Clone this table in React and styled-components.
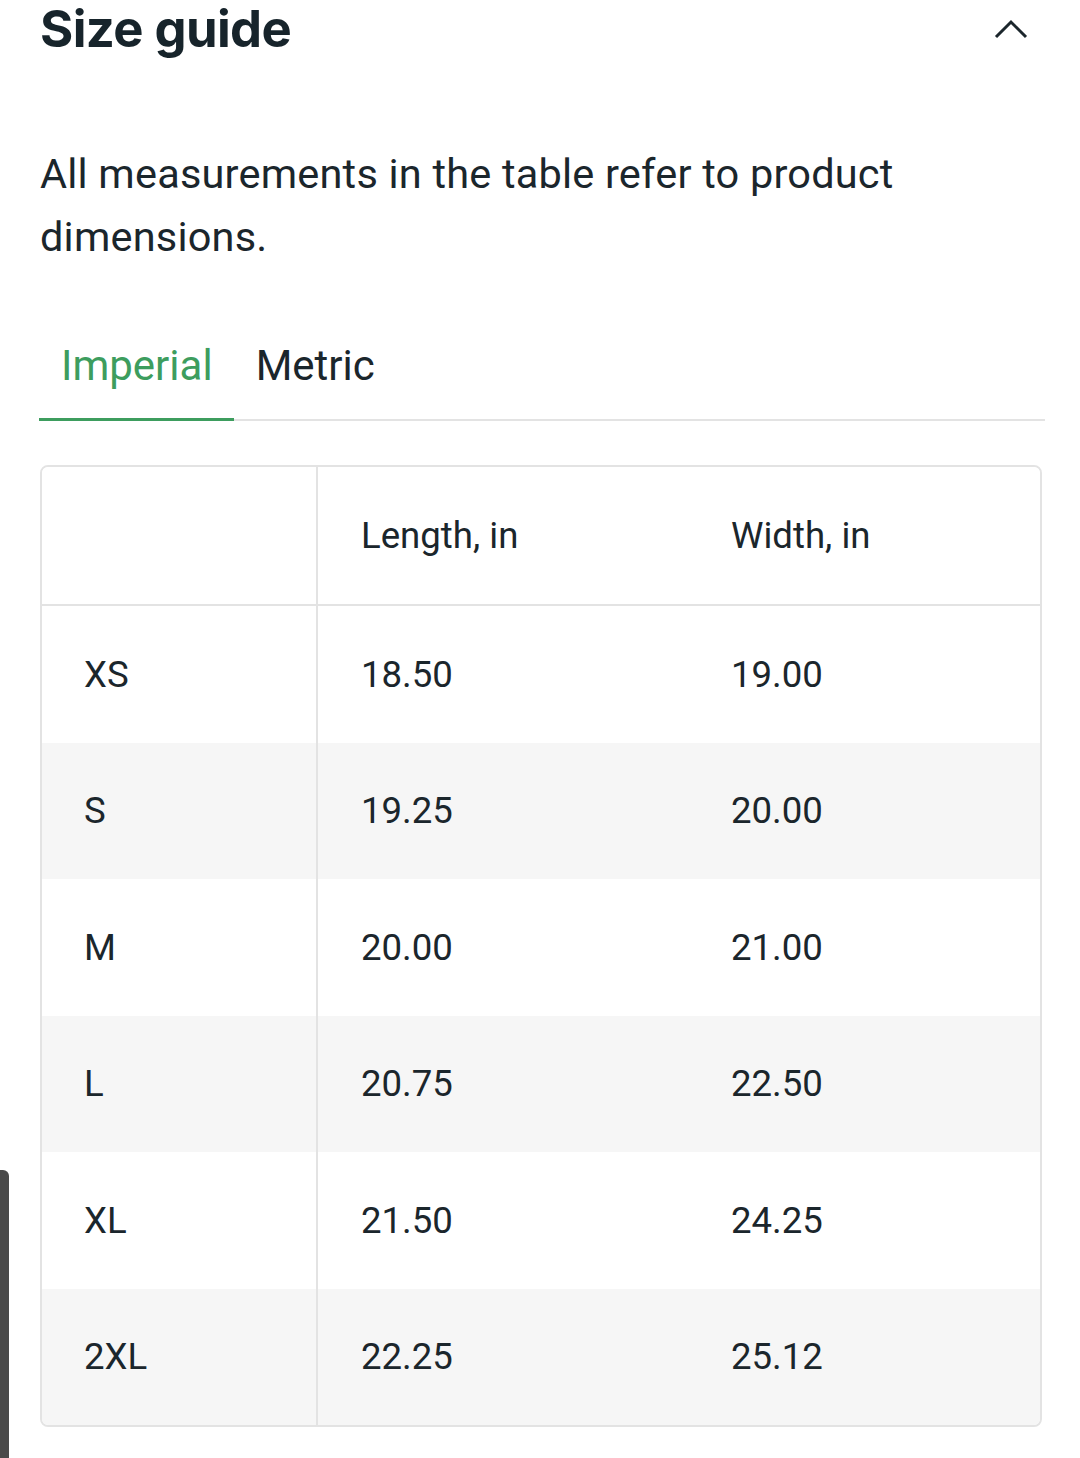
import React, { useState } from 'react';
import styled, { createGlobalStyle } from 'styled-components';

const GlobalStyle = createGlobalStyle`
  html, body {
    margin: 0;
    padding: 0;
    background: #ffffff;
  }
  body {
    font-family: Roboto, "Liberation Sans", sans-serif;
    color: #1b262c;
  }
`;

const Page = styled.div`
  position: relative;
  width: 1080px;
  height: 1458px;
  overflow: hidden;
  padding: 0 38px 0 40px;
  box-sizing: border-box;
`;

const Header = styled.div`
  display: flex;
  justify-content: space-between;
  align-items: center;
  height: 58px;
`;

const Title = styled.h2`
  margin: 0;
  font-family: Inter, Lato, sans-serif;
  font-weight: 700;
  font-size: 50.8px;
  line-height: 58px;
  letter-spacing: -0.6px;
  color: #17242b;
`;

const Chevron = styled.button`
  display: flex;
  border: 0;
  background: none;
  padding: 0;
  margin-right: 14px;
  cursor: pointer;
`;

const Intro = styled.p`
  margin: 84px 0 0;
  font-size: 41.5px;
  line-height: 63px;
  color: #1b262c;
  letter-spacing: 0.2px;
`;

const Tabs = styled.div`
  display: flex;
  margin-top: 70px;
  border-bottom: 2px solid #e3e3e3;
  margin-right: -3px;
  margin-left: -1px;
`;

const Tab = styled.button`
  border: 0;
  background: none;
  padding: 4px 21px 28px 22px;
  margin-bottom: -2px;
  font-family: Roboto, "Liberation Sans", sans-serif;
  font-size: 42px;
  line-height: 48px;
  color: ${(p) => (p.$active ? '#3d9d5e' : '#1b262c')};
  border-bottom: 3px solid ${(p) => (p.$active ? '#3d9d5e' : 'transparent')};
  cursor: pointer;
`;

const Table = styled.div`
  margin-top: 44px;
  border: 2px solid #e3e3e3;
  border-radius: 8px;
  overflow: hidden;
`;

const Row = styled.div`
  display: grid;
  grid-template-columns: 276px 370px 1fr;
  height: ${(p) => (p.$head ? '137px' : '136.5px')};
  background: ${(p) => (p.$shade ? '#f6f6f6' : '#ffffff')};
  border-bottom: ${(p) => (p.$head ? '2px solid #e3e3e3' : 'none')};
`;

const Cell = styled.div`
  display: flex;
  align-items: center;
  padding-left: ${(p) => (p.$first ? '42px' : '43px')};
  font-size: 36.6px;
  color: #1b262c;
  border-right: ${(p) => (p.$first ? '2px solid #e3e3e3' : 'none')};
`;

const ScrollThumb = styled.div`
  position: absolute;
  left: 0;
  top: 1170px;
  width: 9px;
  height: 300px;
  background: #4a4a4a;
  border-radius: 0 6px 0 0;
`;

const imperial = [
  ['XS', '18.50', '19.00'],
  ['S', '19.25', '20.00'],
  ['M', '20.00', '21.00'],
  ['L', '20.75', '22.50'],
  ['XL', '21.50', '24.25'],
  ['2XL', '22.25', '25.12'],
];

const metric = [
  ['XS', '47.0', '48.3'],
  ['S', '48.9', '50.8'],
  ['M', '50.8', '53.3'],
  ['L', '52.7', '57.2'],
  ['XL', '54.6', '61.6'],
  ['2XL', '56.5', '63.8'],
];

export default function App() {
  const [unit, setUnit] = useState('imperial');
  const rows = unit === 'imperial' ? imperial : metric;
  const suffix = unit === 'imperial' ? 'in' : 'cm';

  return (
    <>
      <GlobalStyle />
      <Page>
        <Header>
          <Title>Size guide</Title>
          <Chevron aria-label="Collapse">
            <svg width="34" height="20" viewBox="0 0 34 20" fill="none">
              <path d="M2 18 L17 3 L32 18" stroke="#1b262c" strokeWidth="3" />
            </svg>
          </Chevron>
        </Header>
        <Intro>All measurements in the table refer to product dimensions.</Intro>
        <Tabs>
          <Tab $active={unit === 'imperial'} onClick={() => setUnit('imperial')}>Imperial</Tab>
          <Tab $active={unit === 'metric'} onClick={() => setUnit('metric')}>Metric</Tab>
        </Tabs>
        <Table>
          <Row $head>
            <Cell $first />
            <Cell>Length, {suffix}</Cell>
            <Cell>Width, {suffix}</Cell>
          </Row>
          {rows.map((r, i) => (
            <Row key={r[0]} $shade={i % 2 === 1}>
              <Cell $first>{r[0]}</Cell>
              <Cell>{r[1]}</Cell>
              <Cell>{r[2]}</Cell>
            </Row>
          ))}
        </Table>
        <ScrollThumb />
      </Page>
    </>
  );
}
